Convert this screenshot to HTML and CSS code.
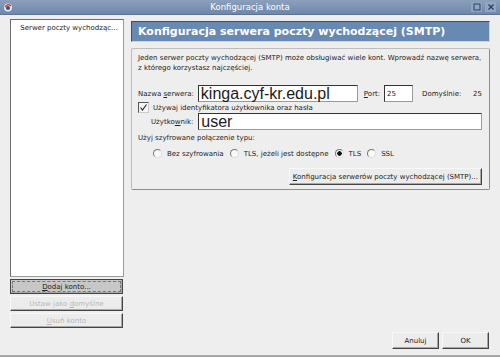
FILE: index.html
```html
<!DOCTYPE html>
<html lang="pl">
<head>
  <meta charset="UTF-8">
  <title>Konfiguracja konta</title>
  <link rel="stylesheet" href="styles.css">
</head>
<body>
<div class="window">
  <div class="titlebar">
    <svg class="app-icon" width="10" height="10" viewBox="0 0 10 10">
      <circle cx="5" cy="5.5" r="4" fill="#e8e8ee"/>
      <path d="M2 5 Q5 1 8 4" stroke="#c05030" stroke-width="1.4" fill="none"/>
      <circle cx="5" cy="6" r="2" fill="#3a4f7a"/>
    </svg>
    <span class="title">Konfiguracja konta</span>
    <div class="win-buttons">
      <span class="win-btn"><svg width="8" height="8" viewBox="0 0 8 8"><rect x="1" y="1" width="6" height="6" fill="none" stroke="#2c3e5a" stroke-width="1"/></svg></span>
      <span class="win-btn"><svg width="8" height="8" viewBox="0 0 8 8"><path d="M1.5 1.5 L6.5 6.5 M6.5 1.5 L1.5 6.5" stroke="#2c3e5a" stroke-width="1.3"/></svg></span>
    </div>
  </div>

  <div class="content">
    <div class="sidebar">
      <div class="account-list">
        <div class="account-item">Serwer poczty wychodząc...</div>
      </div>
      <button class="side-btn focused"><u>D</u>odaj konto...</button>
      <button class="side-btn" disabled>Ustaw jako <u>d</u>omyślne</button>
      <button class="side-btn" disabled><u>U</u>suń konto</button>
    </div>

    <div class="main">
      <div class="page-header">Konfiguracja serwera poczty wychodzącej (SMTP)</div>

      <div class="group">
        <p class="intro">Jeden serwer poczty wychodzącej (SMTP) może obsługiwać wiele kont. Wprowadź nazwę serwera, z którego korzystasz najczęściej.</p>

        <div class="server-row">
          <label>Nazwa <u>s</u>erwera:</label>
          <div class="field big server-field">kinga.cyf-kr.edu.pl</div>
          <label><u>P</u>ort:</label>
          <div class="field port-field">25</div>
          <span class="default-label">Domyślnie:</span>
          <span class="default-value">25</span>
        </div>

        <div class="check-row">
          <span class="checkbox"><svg width="9" height="9" viewBox="0 0 9 9"><path d="M1.5 4.5 L3.5 7 L7.5 1.5" stroke="#222" stroke-width="1.1" fill="none"/></svg></span>
          <span>Używaj identyfikatora użytkownika oraz hasła</span>
        </div>

        <div class="user-row">
          <label>Użytko<u>w</u>nik:</label>
          <div class="field big user-field">user</div>
        </div>

        <div class="enc-label">Użyj szyfrowane połączenie typu:</div>
        <div class="radio-row">
          <span class="radio"></span><span>Bez szyfrowania</span>
          <span class="radio"></span><span>TLS, jeżeli jest dostępne</span>
          <span class="radio checked"></span><span>TLS</span>
          <span class="radio"></span><span>SSL</span>
        </div>

        <div class="group-actions">
          <button class="btn"><u>K</u>onfiguracja serwerów poczty wychodzącej (SMTP)...</button>
        </div>
      </div>
    </div>
  </div>

  <div class="footer">
    <button class="btn dialog-btn">Anuluj</button>
    <button class="btn dialog-btn">OK</button>
  </div>
</div>
</body>
</html>
```

FILE: styles.css
```css
body {
  margin: 0;
  background: #ededed;
  font-family: 'DejaVu Sans', Verdana, sans-serif;
  font-size: 7px;
  color: #222;
}
u {
  text-decoration: underline;
}
.window {
  width: 500px;
  height: 357px;
  display: flex;
  flex-direction: column;
  box-sizing: border-box;
  border-bottom: 2px solid #a8a8a8;
  background: #eeeeee;
}
.titlebar {
  height: 14px;
  display: flex;
  align-items: center;
  padding: 0 4px 0 3px;
  background: linear-gradient(#8aa0bd, #6f88a9);
  border-bottom: 1px solid #5c7394;
  color: #ffffff;
}
.app-icon {
  flex: none;
}
.title {
  flex: 1;
  text-align: center;
  font-size: 8.5px;
  padding-left: 16px;
}
.win-buttons {
  display: flex;
  gap: 3px;
}
.win-btn {
  width: 11px;
  height: 10px;
  display: flex;
  align-items: center;
  justify-content: center;
  background: #90a6c2;
}
.content {
  flex: 1;
  display: flex;
  padding: 4px 10px 0 10px;
  gap: 7px;
}
.sidebar {
  width: 114px;
  display: flex;
  flex-direction: column;
  gap: 2px;
  padding-bottom: 4px;
}
.account-list {
  flex: 1;
  background: #ffffff;
  border: 1px solid #9a9a9a;
  border-top-color: #6d6d6d;
  border-left-color: #6d6d6d;
  padding: 4px 2px;
}
.account-item {
  text-align: center;
  white-space: nowrap;
  padding-left: 4px;
}
.side-btn, .btn {
  font-family: inherit;
  font-size: 7px;
  color: #222;
  background: #ececec;
  border: 1px solid #f8f8f8;
  border-right-color: #444;
  border-bottom-color: #444;
  box-shadow: inset -1px -1px 0 #a8a8a8;
  padding: 0;
  cursor: default;
}
.side-btn {
  height: 15px;
  width: 113px;
}
.side-btn.focused {
  background: #c7c7c7;
  border: 1px solid #444;
  outline: 1px dashed #777;
  outline-offset: -3px;
}
.side-btn:disabled {
  color: #b8b8b8;
}
.main {
  flex: 1;
  display: flex;
  flex-direction: column;
  padding-top: 2px;
}
.page-header {
  height: 19px;
  display: flex;
  align-items: center;
  padding-left: 6px;
  background: #6889b2;
  border: 1px solid #3c4f6a;
  border-right-color: #c9d4e2;
  border-bottom-color: #c9d4e2;
  color: #ffffff;
  font-size: 11px;
  font-weight: bold;
}
.group {
  margin-top: 6px;
  border: 1px solid #bdbdbd;
  border-right-color: #8d8d8d;
  border-bottom-color: #8d8d8d;
  border-radius: 2px;
  padding: 4px 7px 4px 6px;
  display: flex;
  flex-direction: column;
}
.intro {
  margin: 0;
  line-height: 10px;
}
.server-row {
  display: flex;
  align-items: center;
  margin-top: 12px;
  gap: 4px;
}
.field {
  background: #ffffff;
  border: 1px solid #9a9a9a;
  border-top-color: #333;
  border-left-color: #333;
  height: 14px;
  box-sizing: border-box;
  padding-left: 2px;
  display: flex;
  align-items: center;
}
.field.big {
  font-family: 'Liberation Sans', Arial, sans-serif;
  font-size: 16px;
  line-height: 1;
  height: 17px;
  color: #1a1a1a;
}
.server-field {
  width: 160px;
  margin-right: 2px;
}
.port-field {
  width: 29px;
  height: 17px;
  margin-right: 5px;
}
.default-label {
  flex: 1;
}
.check-row {
  display: flex;
  align-items: center;
  gap: 4px;
  margin-top: 0;
}
.checkbox {
  width: 9px;
  height: 9px;
  border: 1px solid #555;
  border-right-color: #ccc;
  border-bottom-color: #ccc;
  background: #f6f6f6;
  display: flex;
}
.user-row {
  display: flex;
  align-items: center;
  gap: 4px;
  margin-top: 0;
  padding-left: 13px;
}
.user-field {
  flex: 1;
  margin-left: 1px;
}
.enc-label {
  margin-top: 4px;
}
.radio-row {
  display: flex;
  align-items: center;
  margin-top: 7px;
  padding-left: 15px;
}
.radio {
  width: 7px;
  height: 7px;
  border-radius: 50%;
  border: 1px solid #777;
  border-right-color: #ddd;
  border-bottom-color: #ddd;
  background: #f8f8f8;
  margin-right: 5px;
  margin-left: 6px;
}
.radio:first-child {
  margin-left: 0;
}
.radio.checked {
  background: radial-gradient(circle, #111 0 2px, #f8f8f8 2.5px);
}
.group-actions {
  display: flex;
  justify-content: flex-end;
  margin-top: 10px;
}
.group-actions .btn {
  height: 17px;
  padding: 0 3px;
}
.footer {
  display: flex;
  justify-content: flex-end;
  gap: 3px;
  padding: 0 11px 6px 0;
}
.dialog-btn {
  width: 47px;
  height: 17px;
}
```
